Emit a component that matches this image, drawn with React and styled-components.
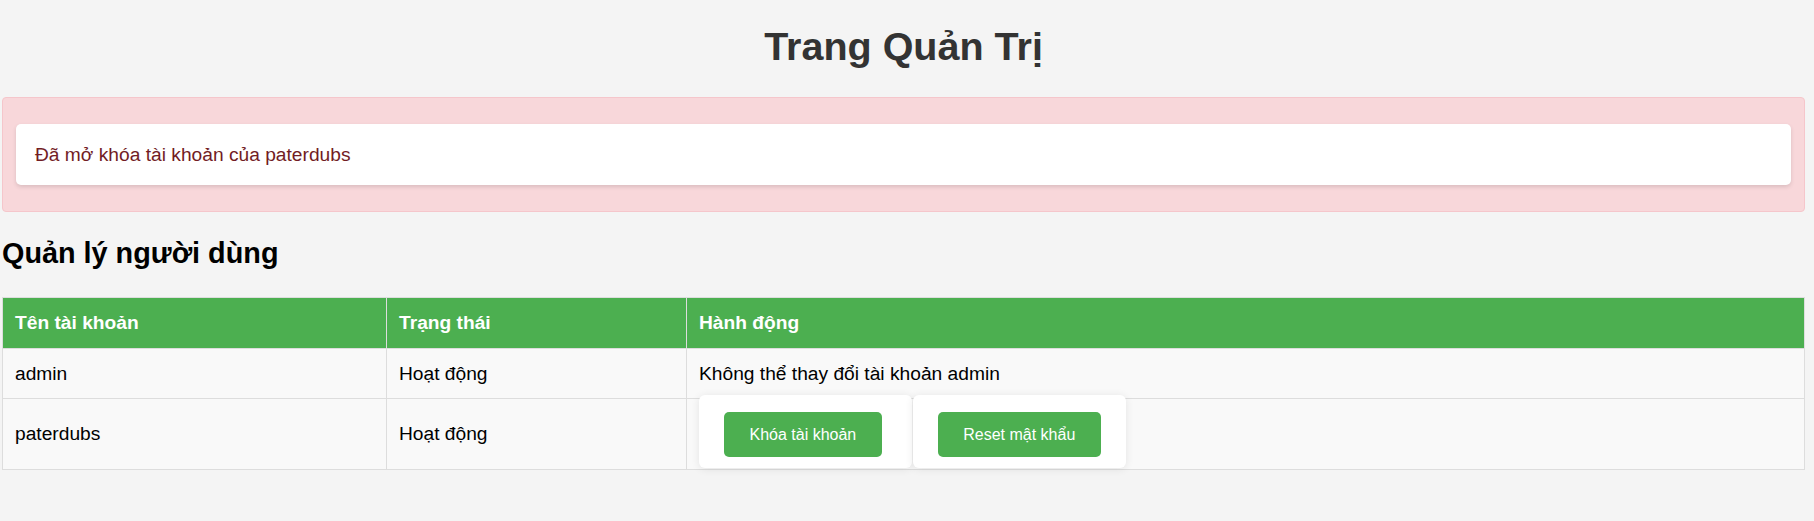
import React from "react";
import styled, { createGlobalStyle } from "styled-components";

const GlobalStyle = createGlobalStyle`
  html, body {
    margin: 0;
    padding: 0;
    background: #f4f4f4;
    font-family: "Liberation Sans", Arial, sans-serif;
  }
  * { box-sizing: border-box; }
`;

const Page = styled.div`
  padding: 24px 9px 40px 2px;
`;

const Title = styled.h1`
  margin: 0 0 29px;
  font-size: 39.5px;
  line-height: 44px;
  font-weight: bold;
  color: #333;
  text-align: center;
`;

const Alert = styled.div`
  background: #f8d7da;
  border: 1px solid #f5c6cb;
  border-radius: 4px;
  padding: 26px 13px;
`;

const Message = styled.div`
  background: #fff;
  border-radius: 5px;
  box-shadow: 0 2px 4px rgba(0, 0, 0, 0.12);
  padding: 19.5px 19px;
  font-size: 19.2px;
  line-height: 22px;
  color: #721c24;
`;

const SectionTitle = styled.h2`
  margin: 25px 0 27px;
  font-size: 28.8px;
  line-height: 33px;
  font-weight: bold;
  color: #000;
`;

const Table = styled.table`
  width: 100%;
  border-collapse: collapse;
  table-layout: fixed;
  font-size: 19.2px;
  line-height: 22px;
`;

const HeadRow = styled.tr`
  background: #4caf50;
`;

const Row = styled.tr`
  background: #f9f9f9;
`;

const Th = styled.th`
  border: 1px solid #ddd;
  padding: 14px 12px;
  text-align: left;
  font-weight: bold;
  color: #fff;
`;

const Td = styled.td`
  border: 1px solid #ddd;
  padding: 13.5px 12px;
  text-align: left;
  vertical-align: middle;
  color: #000;
`;

const Actions = styled.div`
  display: flex;
  gap: 1px;
  margin: -17.5px 0 -12.5px;
`;

const Card = styled.form`
  display: flex;
  background: #fff;
  border-radius: 6px;
  box-shadow: 0 1px 8px rgba(0, 0, 0, 0.09);
  padding: 17px ${(p) => p.$padRight}px 11px 25px;
  margin: 0;
`;

const Button = styled.button`
  height: 45px;
  padding: 0 25.5px;
  border: none;
  border-radius: 5px;
  background: #4caf50;
  color: #fff;
  font-family: "Liberation Sans", Arial, sans-serif;
  font-size: 16px;
  cursor: pointer;
`;

const users = [
  { name: "admin", status: "Hoạt động", locked: true },
  { name: "paterdubs", status: "Hoạt động", locked: false },
];

export default function App() {
  return (
    <>
      <GlobalStyle />
      <Page>
        <Title>Trang Quản Trị</Title>
        <Alert>
          <Message>Đã mở khóa tài khoản của paterdubs</Message>
        </Alert>
        <SectionTitle>Quản lý người dùng</SectionTitle>
        <Table>
          <colgroup>
            <col style={{ width: 384 }} />
            <col style={{ width: 300 }} />
            <col />
          </colgroup>
          <thead>
            <HeadRow>
              <Th>Tên tài khoản</Th>
              <Th>Trạng thái</Th>
              <Th>Hành động</Th>
            </HeadRow>
          </thead>
          <tbody>
            {users.map((u) => (
              <Row key={u.name}>
                <Td>{u.name}</Td>
                <Td>{u.status}</Td>
                <Td>
                  {u.locked ? (
                    "Không thể thay đổi tài khoản admin"
                  ) : (
                    <Actions>
                      <Card $padRight={30} onSubmit={(e) => e.preventDefault()}>
                        <Button type="submit">Khóa tài khoản</Button>
                      </Card>
                      <Card $padRight={25} onSubmit={(e) => e.preventDefault()}>
                        <Button type="submit">Reset mật khẩu</Button>
                      </Card>
                    </Actions>
                  )}
                </Td>
              </Row>
            ))}
          </tbody>
        </Table>
      </Page>
    </>
  );
}
